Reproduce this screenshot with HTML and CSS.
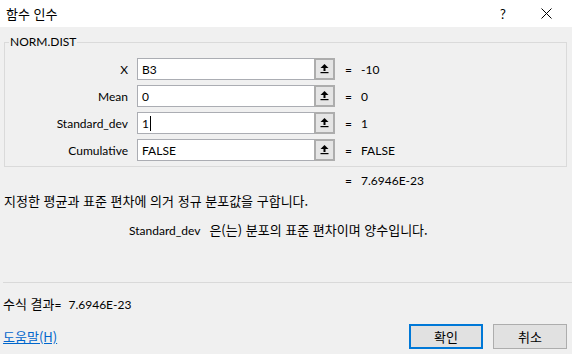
FILE: index.html
```html
<!DOCTYPE html>
<html lang="ko">
<head>
<meta charset="utf-8">
<title>함수 인수</title>
<link rel="stylesheet" href="styles.css">
</head>
<body>
<div class="titlebar">
  <span class="title ko">함수 인수</span>
  <span class="tb-help">?</span>
  <span class="tb-close">
    <svg width="11" height="11" viewBox="0 0 11 11"><path d="M0.5 0.5 L10.5 10.5 M10.5 0.5 L0.5 10.5" stroke="#000" stroke-width="1" fill="none"/></svg>
  </span>
</div>
<div class="main">
  <fieldset class="group">
    <legend class="legend">NORM.DIST</legend>
    <div class="args">
      <div class="arg-label">X</div>
      <div class="arg-input">B3</div>
      <div class="ref-btn"><svg width="9" height="10" viewBox="0 0 9 10"><path d="M4.5 0 L8.5 4 L5.5 4 L5.5 7 L3.5 7 L3.5 4 L0.5 4 Z" fill="#000"/><rect x="0.5" y="8" width="8" height="1.2" fill="#000"/></svg></div>
      <div class="arg-eq">=</div>
      <div class="arg-val">-10</div>

      <div class="arg-label">Mean</div>
      <div class="arg-input">0</div>
      <div class="ref-btn"><svg width="9" height="10" viewBox="0 0 9 10"><path d="M4.5 0 L8.5 4 L5.5 4 L5.5 7 L3.5 7 L3.5 4 L0.5 4 Z" fill="#000"/><rect x="0.5" y="8" width="8" height="1.2" fill="#000"/></svg></div>
      <div class="arg-eq">=</div>
      <div class="arg-val">0</div>

      <div class="arg-label">Standard_dev</div>
      <div class="arg-input">1<span class="caret"></span></div>
      <div class="ref-btn"><svg width="9" height="10" viewBox="0 0 9 10"><path d="M4.5 0 L8.5 4 L5.5 4 L5.5 7 L3.5 7 L3.5 4 L0.5 4 Z" fill="#000"/><rect x="0.5" y="8" width="8" height="1.2" fill="#000"/></svg></div>
      <div class="arg-eq">=</div>
      <div class="arg-val">1</div>

      <div class="arg-label">Cumulative</div>
      <div class="arg-input">FALSE</div>
      <div class="ref-btn"><svg width="9" height="10" viewBox="0 0 9 10"><path d="M4.5 0 L8.5 4 L5.5 4 L5.5 7 L3.5 7 L3.5 4 L0.5 4 Z" fill="#000"/><rect x="0.5" y="8" width="8" height="1.2" fill="#000"/></svg></div>
      <div class="arg-eq">=</div>
      <div class="arg-val">FALSE</div>
    </div>
  </fieldset>
  <div class="result"><span class="eq">=</span><span>7.6946E-23</span></div>
  <div class="desc ko">지정한 평균과 표준 편차에 의거 정규 분포값을 구합니다.</div>
  <div class="argdesc"><span class="argname">Standard_dev</span><span class="ko">은(는) 분포의 표준 편차이며 양수입니다.</span></div>
</div>
<div class="separator"></div>
<div class="footer">
  <div class="formula"><span class="ko">수식 결과</span>=<span class="formula-val">7.6946E-23</span></div>
  <div class="bottom">
    <a class="help-link ko" href="#">도움말(H)</a>
    <div class="buttons">
      <button class="btn btn-default ko">확인</button>
      <button class="btn ko">취소</button>
    </div>
  </div>
</div>
</body>
</html>
```
FILE: styles.css
```css
html, body {
  margin: 0;
  padding: 0;
}
body {
  width: 572px;
  height: 354px;
  background: #f0f0f0;
  font-family: "Lato", "Noto Sans CJK KR", sans-serif;
  font-size: 12px;
  color: #000;
  overflow: hidden;
}
.ko {
  font-family: "Noto Sans CJK KR", "Lato", sans-serif;
  font-size: 13px;
}
.titlebar {
  height: 27px;
  background: #fff;
  display: flex;
  align-items: center;
  padding-left: 6px;
}
.title {
  flex: 1;
  line-height: 16px;
}
.tb-help {
  width: 14px;
  margin-right: 27px;
  font-size: 13px;
  line-height: 16px;
}
.tb-close {
  width: 11px;
  height: 11px;
  margin-right: 20px;
  display: flex;
}
.main {
  padding: 0 5px 0 4px;
}
.group {
  margin: 7px 0 0 0;
  padding: 8px 0 5px 0;
  border: 1px solid #dadada;
  min-width: 0;
}
.legend {
  margin-left: 4px;
  padding: 0 1px;
  line-height: 16px;
}
.args {
  display: grid;
  grid-template-columns: 123px 186px 21px auto 1fr;
  grid-auto-rows: 22px;
  row-gap: 5px;
  align-items: center;
}
.arg-label {
  text-align: right;
}
.arg-input {
  margin-left: 9px;
  height: 22px;
  box-sizing: border-box;
  background: #fff;
  border: 1px solid #abadb3;
  border-right: none;
  padding-left: 4px;
  display: flex;
  align-items: center;
}
.ref-btn {
  height: 22px;
  box-sizing: border-box;
  border: 2px solid #adadad;
  background: #e5e5e5;
  display: flex;
  align-items: center;
  justify-content: center;
}
.arg-eq {
  padding-left: 10px;
  width: 6px;
}
.arg-val {
  padding-left: 10px;
}
.caret {
  display: inline-block;
  width: 1px;
  height: 15px;
  background: #000;
  margin-left: 1px;
}
.result {
  margin-top: 6px;
  line-height: 16px;
  padding-left: 341px;
  display: flex;
}
.eq {
  width: 16px;
}
.desc {
  margin-top: 3px;
  line-height: 18px;
}
.argdesc {
  margin-top: 11px;
  line-height: 18px;
  padding-left: 125px;
  display: flex;
  align-items: baseline;
  gap: 9px;
}
.separator {
  margin: 42px 0 0 3px;
  height: 1px;
  background: #d9d9d9;
}
.footer {
  padding: 0 5px 0 3px;
}
.formula {
  margin-top: 12px;
  line-height: 18px;
  display: flex;
  align-items: baseline;
}
.formula-val {
  margin-left: 7px;
}
.bottom {
  margin-top: 10px;
  display: flex;
  align-items: center;
  justify-content: space-between;
}
.help-link {
  color: #0066cc;
  text-decoration: underline;
  line-height: 16px;
}
.buttons {
  display: flex;
  gap: 10px;
}
.btn {
  width: 74px;
  height: 25px;
  box-sizing: border-box;
  border: 1px solid #adadad;
  background: #e1e1e1;
  color: #000;
  padding: 0;
}
.btn-default {
  border: 2px solid #0078d7;
}
```
